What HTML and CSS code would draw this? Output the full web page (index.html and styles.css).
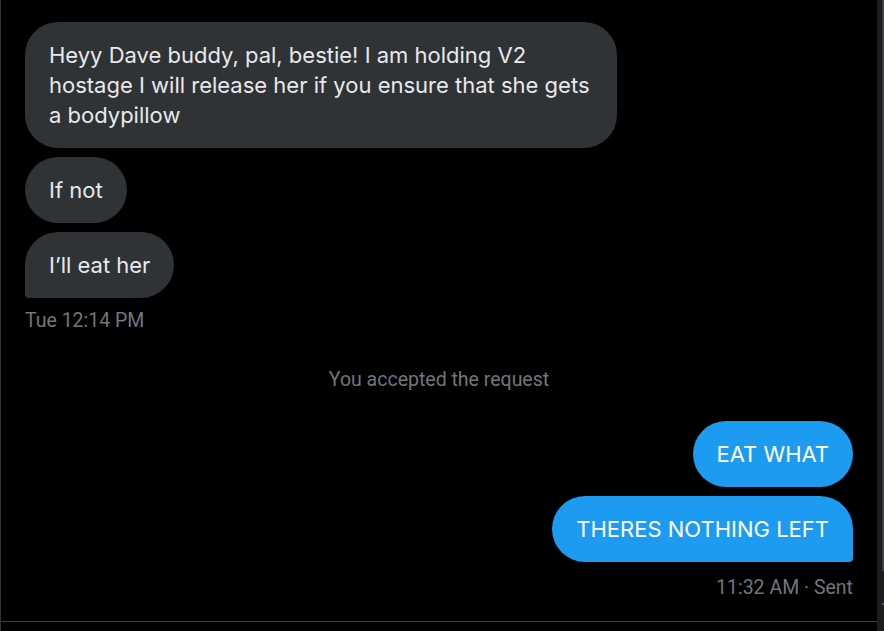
FILE: index.html
```html
<!DOCTYPE html>
<html lang="en">
<head>
<meta charset="utf-8">
<title>Messages</title>
<link rel="stylesheet" href="styles.css">
</head>
<body>
<div class="frame">
  <div class="pane">
    <div class="conversation">
      <div class="group group-in">
        <div class="bubble bubble-in wide">Heyy Dave buddy, pal, bestie! I am holding V2 hostage I will release her if you ensure that she gets a bodypillow</div>
        <div class="bubble bubble-in">If not</div>
        <div class="bubble bubble-in last-in">I’ll eat her</div>
        <div class="meta">Tue 12:14 PM</div>
      </div>
      <div class="notice">You accepted the request</div>
      <div class="group group-out">
        <div class="bubble bubble-out">EAT WHAT</div>
        <div class="bubble bubble-out last-out">THERES NOTHING LEFT</div>
        <div class="meta meta-out">11:32 AM · Sent</div>
      </div>
    </div>
    <div class="composer-edge"></div>
  </div>
  <div class="scrollbar"><div class="thumb"></div><div class="arrow"></div></div>
</div>
</body>
</html>
```
FILE: styles.css
```css
html, body {
  margin: 0;
  padding: 0;
  background: #000;
}
body {
  width: 884px;
  height: 631px;
  overflow: hidden;
  font-family: Inter, Roboto, "Liberation Sans", sans-serif;
  color: #e7e9ea;
}
.frame {
  display: flex;
  height: 631px;
}
.pane {
  flex: 1;
  display: flex;
  flex-direction: column;
  border-left: 1px solid #2f3336;
}
.conversation {
  height: 621px;
  padding: 22px 24px 0 24px;
  box-sizing: border-box;
}
.composer-edge {
  border-top: 1px solid #3b3f43;
  flex: 1;
}
.group {
  display: flex;
  flex-direction: column;
  gap: 9px;
}
.group-in { align-items: flex-start; }
.group-out { align-items: flex-end; }
.bubble {
  font-size: 22px;
  line-height: 30px;
  padding: 18px 24px;
  border-radius: 33px;
  max-width: 592px;
  box-sizing: border-box;
}
.bubble-in { background: #2f3336; }
.bubble-out { background: #1d9bf0; color: #fff; }
.last-in { border-bottom-left-radius: 4px; }
.last-out { border-bottom-right-radius: 4px; }
.meta {
  font-family: Roboto, "Liberation Sans", sans-serif;
  font-size: 19.5px;
  line-height: 24px;
  color: #71767b;
  margin-top: 2px;
}
.meta-out { margin-top: 5px; }
.notice {
  font-family: Roboto, "Liberation Sans", sans-serif;
  text-align: center;
  font-size: 19.5px;
  line-height: 24px;
  color: #71767b;
  margin: 35px 0 29px;
}
.scrollbar {
  width: 7px;
  background: #1b1c1e;
  display: flex;
  flex-direction: column;
  align-items: flex-end;
}
.thumb {
  width: 2px;
  height: 571px;
  background: #3c3f42;
}
.arrow {
  margin-top: 32px;
  width: 0;
  height: 0;
  border-left: 3px solid transparent;
  border-top: 3px solid #55595d;
}
```
